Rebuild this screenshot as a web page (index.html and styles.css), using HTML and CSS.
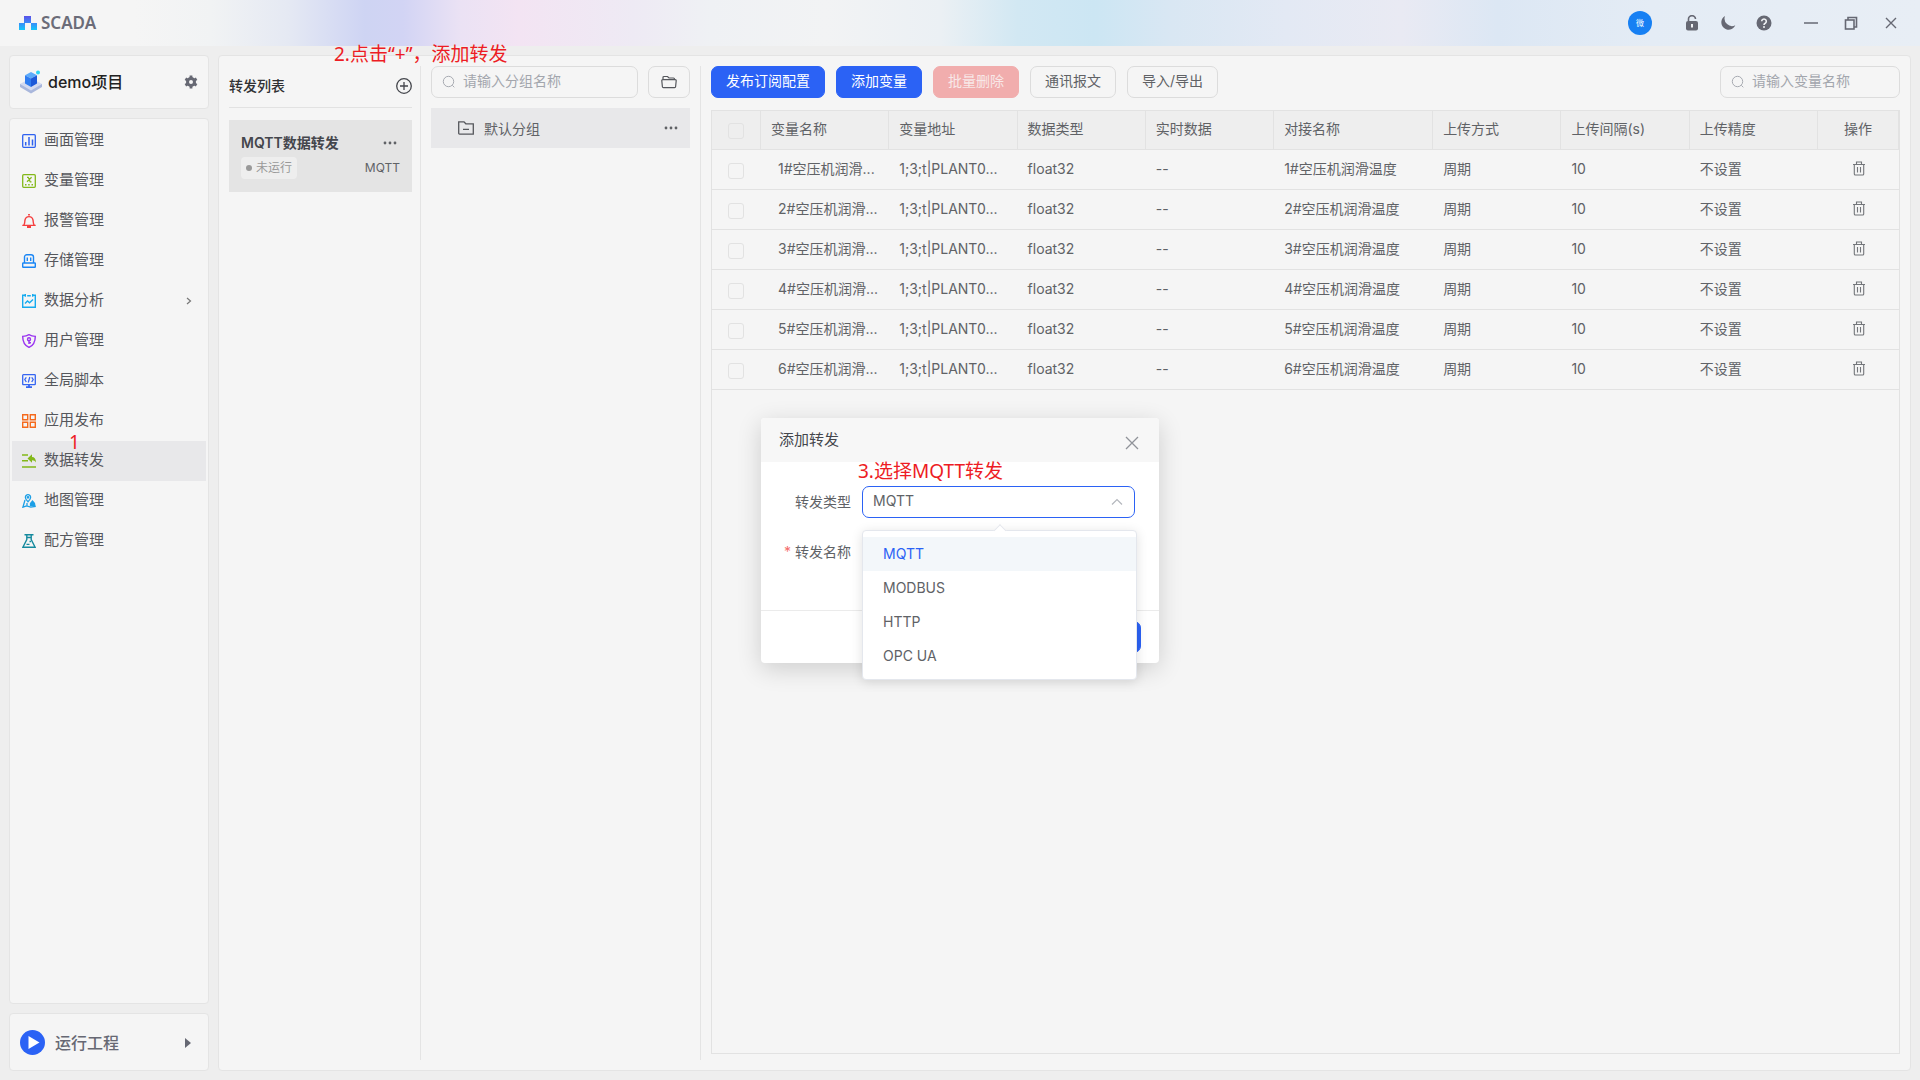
FILE: index.html
```html
<!DOCTYPE html>
<html lang="zh-CN">
<head>
    <meta charset="UTF-8">
    <meta name="viewport" content="width=device-width, initial-scale=1.0">
    <title>SCADA</title>
    <link rel="stylesheet" href="styles.css">
</head>
<body>

    <header class="topbar">
        <div class="logo">
            <svg width="18" height="14" viewBox="0 0 18 14">
                <defs>
                    <linearGradient id="logo-fill" x1="0" y1="0" x2="0" y2="1">
                        <stop offset="0" stop-color="#5b50e8"/>
                        <stop offset="0.5" stop-color="#3a8cf8"/>
                        <stop offset="1" stop-color="#12c8fa"/>
                    </linearGradient>
                </defs>
                <path fill="url(#logo-fill)" d="M5 0h7v7h6v7h-6V7H6v7H0V7h5z"/>
            </svg>
            <span>SCADA</span>
        </div>
        <div class="topbar-tools">
            <button class="avatar" aria-label="用户">微</button>
            <button class="icon-btn" aria-label="锁定">
                <svg width="16" height="16" viewBox="0 0 16 16"><path d="M4.500 6V4.300a3.500 3.500 0 0 1 7-.3" fill="none" stroke="#666873" stroke-width="1.600"/><rect x="2" y="6" width="12" height="9.500" rx="2" fill="#666873"/><path d="M8 9v3.500" stroke="#f0f2f5" stroke-width="2"/></svg>
            </button>
            <button class="icon-btn" aria-label="主题">
                <svg width="16" height="16" viewBox="0 0 16 16"><path fill="#666873" d="M5 1a7.300 7.300 0 1 0 10.300 9.300A7.500 7.500 0 0 1 5 1z"/></svg>
            </button>
            <button class="icon-btn" aria-label="帮助">
                <svg width="16" height="16" viewBox="0 0 16 16"><circle cx="8" cy="8" r="7.500" fill="#666873"/><path d="M5.700 6.300a2.300 2.300 0 1 1 3.500 2C8.300 8.800 8 9.100 8 10" fill="none" stroke="#f0f2f5" stroke-width="1.600"/><circle cx="8" cy="12" r="1" fill="#f0f2f5"/></svg>
            </button>
            <div class="window-tools">
                <button class="icon-btn" aria-label="最小化">
                    <svg width="14" height="14" viewBox="0 0 14 14"><path d="M0 7h14" stroke="#666873" stroke-width="1.500"/></svg>
                </button>
                <button class="icon-btn" aria-label="还原">
                    <svg width="14" height="14" viewBox="0 0 14 14" fill="none" stroke="#666873" stroke-width="1.600"><rect x="1.500" y="4" width="8.500" height="9"/><path d="M4 4V1.500h8.500V11H10"/></svg>
                </button>
                <button class="icon-btn" aria-label="关闭">
                    <svg width="14" height="14" viewBox="0 0 14 14"><path d="M2 2l10 10M12 2L2 12" stroke="#666873" stroke-width="1.400"/></svg>
                </button>
            </div>
        </div>
    </header>

    <div class="layout">
        <aside class="sidebar">
            <div class="card project">
                <svg width="22" height="24" viewBox="0 0 22 24">
                    <path fill="#a9b7dc" d="M0 14v3l11 6.500L22 17v-3z"/>
                    <path fill="#d3daf0" d="M11 8l11 6-11 6.500L0 14z"/>
                    <path fill="#5cabfa" d="M11 2l6 3.200-6 3.300-6-3.300z"/>
                    <path fill="#2f7cf0" d="M5 5.200l6 3.300V17l-6-3.500z"/>
                    <path fill="#1c58d8" d="M17 5.200l-6 3.300V17l6-3.500z"/>
                    <circle cx="18" cy="2.500" r="2" fill="#2fd3f2"/>
                </svg>
                <span class="project-name">demo项目</span>
                <button class="icon-btn" aria-label="设置">
                    <svg width="14" height="14" viewBox="0 0 14 14"><path fill="none" stroke="#666873" stroke-width="2.800" d="M7 .500V3M7 11v2.500M1.400 3.700l2.100 1.300M10.500 9l2.100 1.300M1.400 10.300L3.500 9M10.500 5l2.100-1.300"/><circle cx="7" cy="7" r="3.500" fill="none" stroke="#666873" stroke-width="3"/></svg>
                </button>
            </div>

            <nav class="card menu">
                <a href="#" class="menu-item">
                    <svg viewBox="0 0 14 14" fill="none" stroke="#2f62f0"><rect x=".7" y=".7" width="12.600" height="12.600" rx="1" stroke-width="1.300"/><path d="M3.700 8v3.500M7 3v8.500M10.500 5.500v6" stroke-width="1.500"/></svg>
                    <span>画面管理</span>
                </a>
                <a href="#" class="menu-item">
                    <svg viewBox="0 0 14 14" fill="none" stroke="#83b81a"><rect x=".7" y=".7" width="12.600" height="12.600" rx="1" stroke-width="1.300"/><path d="M5 3.300h1.200l2 4.500H9.500M9.600 3.300L5 7.800" stroke-width="1.200"/><path d="M3 10.700h1.500M6.200 10.700h1.500M9.500 10.700H11" stroke-width="1.500"/></svg>
                    <span>变量管理</span>
                </a>
                <a href="#" class="menu-item">
                    <svg viewBox="0 0 14 14" fill="none" stroke="#f53f3f"><path d="M.3 11.400h13.400M1.800 11.200C3 9.500 2.600 8 3 6a4.100 4.300 0 0 1 8 0c.4 2 0 3.500 1.200 5.200" stroke-width="1.400"/><path d="M7 0v1.500M5 13h4" stroke-width="1.800"/></svg>
                    <span>报警管理</span>
                </a>
                <a href="#" class="menu-item">
                    <svg viewBox="0 0 14 14" fill="none" stroke="#1a86f5" stroke-width="1.400"><path d="M2.500 9V3a2.300 2.300 0 0 1 2.300-2.300h4.400A2.300 2.300 0 0 1 11.500 3v6"/><path d="M5.300 3.500V7M8.700 3.500V7"/><rect x=".7" y="9" width="12.600" height="4.300" rx=".5"/></svg>
                    <span>存储管理</span>
                </a>
                <a href="#" class="menu-item">
                    <svg viewBox="0 0 14 14" fill="none" stroke="#16abef" stroke-width="1.400"><path d="M3 1.200H.7v12.100h12.600V1.200H11M5.200 1.700h3.600M3.300 0v2.800M10.700 0v2.800"/><path d="M3 9.500L5.500 7l2 1.800L11 5.500"/></svg>
                    <span>数据分析</span>
                    <svg class="menu-arrow" viewBox="0 0 14 14" fill="none" stroke="#777" stroke-width="1.200"><path d="M5 4l3.500 3L5 10"/></svg>
                </a>
                <a href="#" class="menu-item">
                    <svg viewBox="0 0 14 14" fill="none" stroke="#9a35f0" stroke-width="1.400"><path d="M7 .7c2 1.300 4 1.700 6.300 1.700 0 5.500-1.500 8.800-6.300 11C2.200 11.200.7 7.900.7 2.400 3 2.400 5 2 7 .7z"/><circle cx="7" cy="5.200" r="1.500"/><path d="M7 6.500V10M7 8.700h2"/></svg>
                    <span>用户管理</span>
                </a>
                <a href="#" class="menu-item">
                    <svg viewBox="0 0 14 14" fill="none" stroke="#3565f2" stroke-width="1.300"><rect x=".7" y=".7" width="12.600" height="10" rx=".7"/><path d="M4.300 3.300L2.800 5.500l1.500 2.500M9.700 3.300l1.500 2.200L9.700 8M7.800 3L6.300 8.500"/><path d="M4 13.200h6M7 10.700V13" stroke-width="1.800"/></svg>
                    <span>全局脚本</span>
                </a>
                <a href="#" class="menu-item">
                    <svg viewBox="0 0 14 14" fill="none" stroke="#f56a1d" stroke-width="1.400"><path d="M.7.7h5v5h-5zM8.300.7h5v5h-5zM.7 8.300h5v5h-5zM8.300 8.300h5v5h-5z"/></svg>
                    <span>应用发布</span>
                </a>
                <a href="#" class="menu-item active">
                    <svg viewBox="0 0 14 14" fill="none" stroke="#83b81a" stroke-width="1.600"><path d="M0 1h6M0 6.800h6M0 13h14"/><path d="M5.500 4.500L10 .3V3c2.500 0 4 2 4 5.500C13 7 12 6.200 10 6.200v2.500z" fill="#83b81a" stroke="none"/></svg>
                    <span>数据转发</span>
                    <span class="note note-one">1</span>
                </a>
                <a href="#" class="menu-item">
                    <svg viewBox="0 0 14 14" fill="none" stroke="#1c9fe6" stroke-width="1.300"><path d="M6 .7a2.600 2.600 0 0 1 2.600 2.700C8.600 5 7.500 6 6 7.700 4.500 6 3.400 5 3.400 3.400A2.600 2.600 0 0 1 6 .7z"/><circle cx="6" cy="3.300" r=".7"/><path d="M3 6L.9 13.200l3.600-1.300 4.300 1.300 4.300-.8L12 9M5 9v3"/><path d="M8.500 11.500V9.500l2-2.500 2 2.500v2z" fill="#1c9fe6"/></svg>
                    <span>地图管理</span>
                </a>
                <a href="#" class="menu-item">
                    <svg viewBox="0 0 14 14" fill="none" stroke="#158a9e" stroke-width="1.400"><path d="M2.500.8h9M4.800 1v4.500L.9 13.200h12.200L9.200 5.500V1"/><path d="M5 3.500h4M7.500 7.500H9M4.500 10.300h3" stroke-width="1.300"/></svg>
                    <span>配方管理</span>
                </a>
            </nav>

            <button class="card run">
                <svg width="25" height="25" viewBox="0 0 25 25"><circle cx="12.500" cy="12.500" r="12.500" fill="#2b62f5"/><path fill="#fff" d="M8.500 6l11 6.500-11 6.500z"/></svg>
                <span>运行工程</span>
                <svg class="run-arrow" width="6" height="10" viewBox="0 0 6 10"><path fill="#666873" d="M0 0l6 5-6 5z"/></svg>
            </button>
        </aside>

        <main class="card main">
            <section class="forward-list">
                <div class="forward-header">
                    <h2>转发列表</h2>
                    <button class="icon-btn" aria-label="添加转发">
                        <svg width="16" height="16" viewBox="0 0 16 16" fill="none" stroke="#44464c" stroke-width="1.300"><circle cx="8" cy="8" r="7.300"/><path d="M8 4v8M4 8h8"/></svg>
                    </button>
                </div>
                <div class="forward-card">
                    <div class="forward-row">
                        <strong>MQTT数据转发</strong>
                        <button class="icon-btn" aria-label="更多">
                            <svg width="18" height="4" viewBox="0 0 18 4" fill="#606266"><circle cx="3" cy="2" r="1.400"/><circle cx="8" cy="2" r="1.400"/><circle cx="13" cy="2" r="1.400"/></svg>
                        </button>
                    </div>
                    <div class="forward-row">
                        <span class="status">未运行</span>
                        <span class="protocol">MQTT</span>
                    </div>
                </div>
                <span class="note note-two">2.点击“+”，添加转发</span>
            </section>

            <section class="groups">
                <div class="group-tools">
                    <label class="search">
                        <svg width="14" height="14" viewBox="0 0 14 14" fill="none" stroke="#a8abb2"><circle cx="6.500" cy="6.500" r="5.200"/><path d="M10.300 10.300l2 2"/></svg>
                        <input type="text" placeholder="请输入分组名称" aria-label="请输入分组名称">
                    </label>
                    <button class="btn btn-folder" aria-label="新建分组">
                        <svg width="16" height="14" viewBox="0 0 16 14" fill="none" stroke="#55575c" stroke-width="1.200"><path d="M2 4.500V2.500a1 1 0 0 1 1-1h3.500l1.500 1.500h4.500a1 1 0 0 1 1 1v1M2 4.700h12.300a.9.9 0 0 1 .9 1l-.6 6a1 1 0 0 1-1 .9H2.400a1 1 0 0 1-1-.9l-.6-6a.9.9 0 0 1 .9-1z"/></svg>
                    </button>
                </div>
                <div class="group-item">
                    <svg width="16" height="14" viewBox="0 0 16 14" fill="none" stroke="#55575c" stroke-width="1.300"><path d="M.7 12.300V.8h5.300l1.800 2h7.500v10.300H1.500a.8.8 0 0 1-.8-.8zM5 8.300h6"/></svg>
                    <span>默认分组</span>
                    <button class="icon-btn" aria-label="更多">
                        <svg width="14" height="4" viewBox="0 0 14 4" fill="#606266"><circle cx="2" cy="2" r="1.400"/><circle cx="7" cy="2" r="1.400"/><circle cx="12" cy="2" r="1.400"/></svg>
                    </button>
                </div>
            </section>

            <section class="variables">
                <div class="toolbar">
                    <button class="btn btn-primary">发布订阅配置</button>
                    <button class="btn btn-primary">添加变量</button>
                    <button class="btn btn-danger" disabled>批量删除</button>
                    <button class="btn">通讯报文</button>
                    <button class="btn">导入/导出</button>
                    <label class="search">
                        <svg width="14" height="14" viewBox="0 0 14 14" fill="none" stroke="#a8abb2"><circle cx="6.500" cy="6.500" r="5.200"/><path d="M10.300 10.300l2 2"/></svg>
                        <input type="text" placeholder="请输入变量名称" aria-label="请输入变量名称">
                    </label>
                </div>
                <div class="table-wrap">
                    <table>
                        <colgroup>
                            <col class="col-check">
                            <col span="4">
                            <col class="col-dock">
                            <col span="3">
                            <col class="col-action">
                        </colgroup>
                        <thead>
                            <tr>
                                <th><input type="checkbox" aria-label="全选"></th>
                                <th>变量名称</th>
                                <th>变量地址</th>
                                <th>数据类型</th>
                                <th>实时数据</th>
                                <th>对接名称</th>
                                <th>上传方式</th>
                                <th>上传间隔(s)</th>
                                <th>上传精度</th>
                                <th>操作</th>
                            </tr>
                        </thead>
                        <tbody id="table-body"></tbody>
                    </table>
                </div>
            </section>
        </main>
    </div>

    <div class="dialog" role="dialog" aria-labelledby="dialog-title">
        <div class="dialog-header">
            <h3 id="dialog-title">添加转发</h3>
            <button class="icon-btn" aria-label="关闭">
                <svg width="14" height="14" viewBox="0 0 14 14"><path d="M1 1l12 12M13 1L1 13" stroke="#909399" stroke-width="1.300"/></svg>
            </button>
        </div>
        <div class="dialog-body">
            <span class="note note-three">3.选择MQTT转发</span>
            <div class="form-group">
                <label for="type">转发类型</label>
                <div class="select-box">
                    <select id="type">
                        <option>MQTT</option>
                        <option>MODBUS</option>
                        <option>HTTP</option>
                        <option>OPC UA</option>
                    </select>
                    <svg class="select-arrow" width="12" height="8" viewBox="0 0 12 8" fill="none" stroke="#b4b7bd" stroke-width="1.200"><path d="M1 6.500l5-5 5 5"/></svg>
                    <ul class="dropdown">
                        <li class="selected">MQTT</li>
                        <li>MODBUS</li>
                        <li>HTTP</li>
                        <li>OPC UA</li>
                    </ul>
                </div>
            </div>
            <div class="form-group">
                <label for="name" class="required">转发名称</label>
                <input type="text" id="name">
            </div>
        </div>
        <div class="dialog-footer">
            <button class="btn btn-primary">确定</button>
        </div>
    </div>

    <script>
        const trashIcon = '<svg width="14" height="15" viewBox="0 0 14 15" fill="none" stroke="#73767a" stroke-width="1.1"><path d="M1 3.500h12M4.500 3.300V1h5v2.300M2.300 3.500V13a1 1 0 0 0 1 1h7.400a1 1 0 0 0 1-1V3.500M5.500 6v5.500M8.500 6v5.500"/></svg>';

        function renderTable() {
            const tableBody = document.getElementById("table-body");

            for (let i = 1; i <= 6; i++) {
                const row = tableBody.insertRow();
                row.insertCell().innerHTML = `<input type="checkbox" aria-label="选择${i}">`;

                const values = [`${i}#空压机润滑...`, "1;3;t|PLANT0...", "float32", "--", `${i}#空压机润滑温度`, "周期", "10", "不设置"];
                values.forEach(value => {
                    row.insertCell().textContent = value;
                });

                row.insertCell().innerHTML = `<button class="icon-btn" aria-label="删除">${trashIcon}</button>`;
            }
        }

        renderTable();
    </script>

</body>
</html>
```
FILE: styles.css
```css
* {
    box-sizing: border-box;
}

body {
    font-family: Inter, "Noto Sans CJK SC", sans-serif;
    font-size: 14px;
    line-height: 20px;
    color: #606266;
    background-color: #eee;
    margin: 0;
    height: 100vh;
    display: flex;
    flex-direction: column;
}

button, input, select {
    font: inherit;
    color: inherit;
}

h2, h3 {
    margin: 0;
}

svg {
    display: block;
    flex-shrink: 0;
}

.card {
    background: #f5f5f5;
    border: 1px solid #e4e4e4;
    border-radius: 4px;
}

.icon-btn {
    display: flex;
    background: none;
    border: none;
    padding: 0;
    cursor: pointer;
}

/* top bar */
.topbar {
    height: 46px;
    flex-shrink: 0;
    display: flex;
    justify-content: space-between;
    align-items: center;
    padding: 0 22px 0 19px;
    background: linear-gradient(90deg, #f5f5f5 7%, #f1f3f4 11%, #e5e9f3 15%, #ced4f3 19%, #d2d4f4 21%, #ebe2f4 24%, #f3e4f3 27%, #eeeaf4 33%, #eff1f4 37%, #f2f3f4 43%, #ebf0f4 49%, #d2e8f3 53%, #cce6f3 57%, #d9e7f3 61%, #e3e9f4 67%, #e9eaf3 73%, #dce7f4 78%, #e4ecf5 86%, #e8eef5);
}

.logo {
    display: flex;
    align-items: center;
    gap: 4px;
    font-family: "Noto Sans", sans-serif;
    font-size: 17px;
    font-weight: 600;
    color: #6b6c78;
}

.topbar-tools {
    display: flex;
    align-items: center;
    gap: 20px;
}

.avatar {
    width: 24px;
    height: 24px;
    margin-right: 12px;
    padding: 0;
    border: none;
    border-radius: 50%;
    background: #1780f3;
    color: #fff;
    font-size: 8px;
    line-height: 24px;
}

.window-tools {
    display: flex;
    gap: 26px;
    margin-left: 12px;
}

/* page columns */
.layout {
    flex: 1;
    min-height: 0;
    display: flex;
    gap: 9px;
    padding: 9px;
}

.sidebar {
    width: 200px;
    flex-shrink: 0;
    display: flex;
    flex-direction: column;
    gap: 9px;
}

.project {
    display: flex;
    align-items: center;
    padding: 14px 10px;
    gap: 6px;
}

.project-name {
    flex: 1;
    font-size: 16px;
    line-height: 24px;
    font-weight: 500;
    color: #222;
}

.menu {
    flex: 1;
    padding: 2px;
}

.menu-item {
    position: relative;
    display: flex;
    align-items: center;
    gap: 8px;
    height: 40px;
    padding: 0 10px;
    font-size: 15px;
    color: #55575c;
    text-decoration: none;
}

.menu-item svg {
    width: 14px;
    height: 14px;
}

.menu-item span {
    padding-bottom: 2px;
}

.menu-item .menu-arrow {
    margin-left: auto;
}

.menu-item.active {
    background: #e8e8ea;
}

.run {
    display: flex;
    align-items: center;
    gap: 10px;
    padding: 16px 17px 15px 10px;
    font-size: 16px;
    font-weight: 500;
    color: #666873;
    text-align: left;
}

.run-arrow {
    margin-left: auto;
}

.main {
    flex: 1;
    min-width: 0;
    display: flex;
    padding: 10px;
}

/* forward list */
.forward-list {
    position: relative;
    width: 192px;
    padding-right: 8px;
    border-right: 1px solid #e4e4e4;
}

.forward-header {
    display: flex;
    justify-content: space-between;
    align-items: center;
    height: 42px;
    padding-bottom: 2px;
    border-bottom: 1px solid #e2e2e2;
    margin-bottom: 12px;
}

.forward-header h2 {
    font-size: 14px;
    font-weight: 500;
    color: #303133;
}

.forward-card {
    display: flex;
    flex-direction: column;
    gap: 4px;
    background: #e4e4e4;
    padding: 13px 12px;
}

.forward-row {
    display: flex;
    justify-content: space-between;
    align-items: center;
}

.forward-row strong {
    font-weight: 600;
    color: #44464c;
}

.status {
    display: flex;
    align-items: center;
    gap: 4px;
    padding: 1px 5px;
    border-radius: 4px;
    background: #eee;
    font-size: 12px;
    color: #999;
}

.status::before {
    content: "";
    width: 6px;
    height: 6px;
    border-radius: 50%;
    background: #999;
}

.protocol {
    font-size: 12px;
}

/* groups */
.groups {
    width: 280px;
    padding: 0 10px;
    border-right: 1px solid #e4e4e4;
}

.group-tools {
    display: flex;
    gap: 10px;
    margin-bottom: 10px;
}

.search {
    display: flex;
    align-items: center;
    gap: 7px;
    height: 32px;
    padding: 0 10px;
    border: 1px solid #dcdcdc;
    border-radius: 7px;
}

.search input {
    width: 100%;
    min-width: 0;
    padding: 0 0 2px;
    border: none;
    outline: none;
    background: none;
}

.search input::placeholder {
    color: #a3a6ad;
}

.btn {
    height: 32px;
    padding: 0 14px 2px;
    border: 1px solid #dcdcdc;
    border-radius: 7px;
    background: none;
    line-height: 20px;
    cursor: pointer;
}

.btn-folder {
    padding: 0 12px;
}

.btn-primary {
    background: #2b62f5;
    border-color: #2b62f5;
    color: #fff;
}

.btn-danger {
    background: #f1adad;
    border-color: #f1adad;
    color: #f8e8e8;
}

.group-item {
    display: flex;
    align-items: center;
    gap: 10px;
    height: 40px;
    padding: 0 12px 0 27px;
    background: #e8e8ea;
}

.group-item span {
    padding-top: 2px;
}

.group-item .icon-btn {
    margin-left: auto;
}

/* variables */
.variables {
    flex: 1;
    min-width: 0;
    display: flex;
    flex-direction: column;
    padding-left: 10px;
    padding-bottom: 6px;
}

.toolbar {
    display: flex;
    gap: 11px;
    margin-bottom: 12px;
}

.toolbar .search {
    width: 180px;
    margin-left: auto;
}

.table-wrap {
    flex: 1;
    border: 1px solid #e2e2e2;
}

table {
    width: 100%;
    table-layout: fixed;
    border-collapse: separate;
    border-spacing: 0;
}

.col-check {
    width: 49px;
}

.col-dock {
    width: 159px;
}

.col-action {
    width: 81px;
}

th, td {
    height: 40px;
    padding: 0 10px 2px;
    text-align: left;
    font-weight: 400;
    white-space: nowrap;
    border-bottom: 1px solid #e2e2e2;
}

th {
    height: 39px;
    background: #eee;
    border-right: 1px solid #e2e2e2;
}

td:nth-child(2) {
    padding-left: 17px;
    padding-right: 0;
}

th:first-child, td:first-child {
    padding: 2px 0 0 16px;
}

th:last-child, td:last-child {
    text-align: center;
}

td .icon-btn {
    margin: 0 auto;
}

input[type="checkbox"] {
    appearance: none;
    display: block;
    width: 16px;
    height: 16px;
    margin: 0;
    border: 1px solid #e2e2e2;
    border-radius: 3px;
}

/* dialog */
.dialog {
    position: absolute;
    top: 418px;
    left: 761px;
    width: 398px;
    border-radius: 4px;
    background: #fff;
    box-shadow: 0 6px 24px rgba(0, 0, 0, 0.16);
}

.dialog-header {
    display: flex;
    justify-content: space-between;
    align-items: center;
    height: 44px;
    padding: 0 20px 0 18px;
    border-radius: 4px 4px 0 0;
    background: #f7f7f7;
}

.dialog-header .icon-btn {
    padding-top: 6px;
}

.dialog-header h3 {
    font-size: 15px;
    font-weight: 400;
    color: #44464c;
}

.dialog-body {
    position: relative;
    display: flex;
    flex-direction: column;
    gap: 18px;
    padding: 24px 24px 42px 18px;
}

.form-group {
    display: flex;
    align-items: center;
}

.form-group label {
    width: 83px;
    padding-right: 11px;
    text-align: right;
}

.required::before {
    content: "* ";
    color: #f56c6c;
}

.select-box {
    position: relative;
    flex: 1;
}

.select-box select, .form-group input {
    display: block;
    width: 100%;
    height: 32px;
    padding: 0 10px 2px;
    border: 1px solid #2b62f5;
    border-radius: 7px;
    background: #fff;
    outline: none;
    appearance: none;
}

.form-group input {
    flex: 1;
    border-color: #dcdfe6;
}

.select-arrow {
    position: absolute;
    top: 12px;
    right: 12px;
}

.dropdown {
    position: absolute;
    z-index: 2;
    top: 44px;
    left: 0;
    right: -2px;
    margin: 0;
    padding: 6px 0;
    list-style: none;
    border: 1px solid #e4e7ed;
    border-radius: 4px;
    background: #fff;
    box-shadow: 0 2px 12px rgba(0, 0, 0, 0.12);
}

.dropdown::before {
    content: "";
    position: absolute;
    top: -5px;
    left: 50%;
    width: 8px;
    height: 8px;
    background: #fff;
    border: 1px solid #e4e7ed;
    border-right: none;
    border-bottom: none;
    transform: translateX(-50%) rotate(45deg);
}

.dropdown li {
    height: 34px;
    padding: 0 20px;
    line-height: 34px;
}

.dropdown .selected {
    position: relative;
    background: #f3f7fa;
    color: #2b62f5;
}

.dialog-footer {
    display: flex;
    justify-content: flex-end;
    padding: 10px 18px;
    border-top: 1px solid #ebebeb;
}

/* red step notes */
.note {
    position: absolute;
    z-index: 3;
    font-family: "Noto Sans", "Noto Sans CJK SC", sans-serif;
    font-size: 19px;
    line-height: 24px;
    white-space: nowrap;
    color: #ed1c24;
}

.note-one {
    top: -11px;
    left: 57px;
}

.note-two {
    top: -24px;
    left: 105px;
}

.note-three {
    top: -3px;
    left: 97px;
}
```
